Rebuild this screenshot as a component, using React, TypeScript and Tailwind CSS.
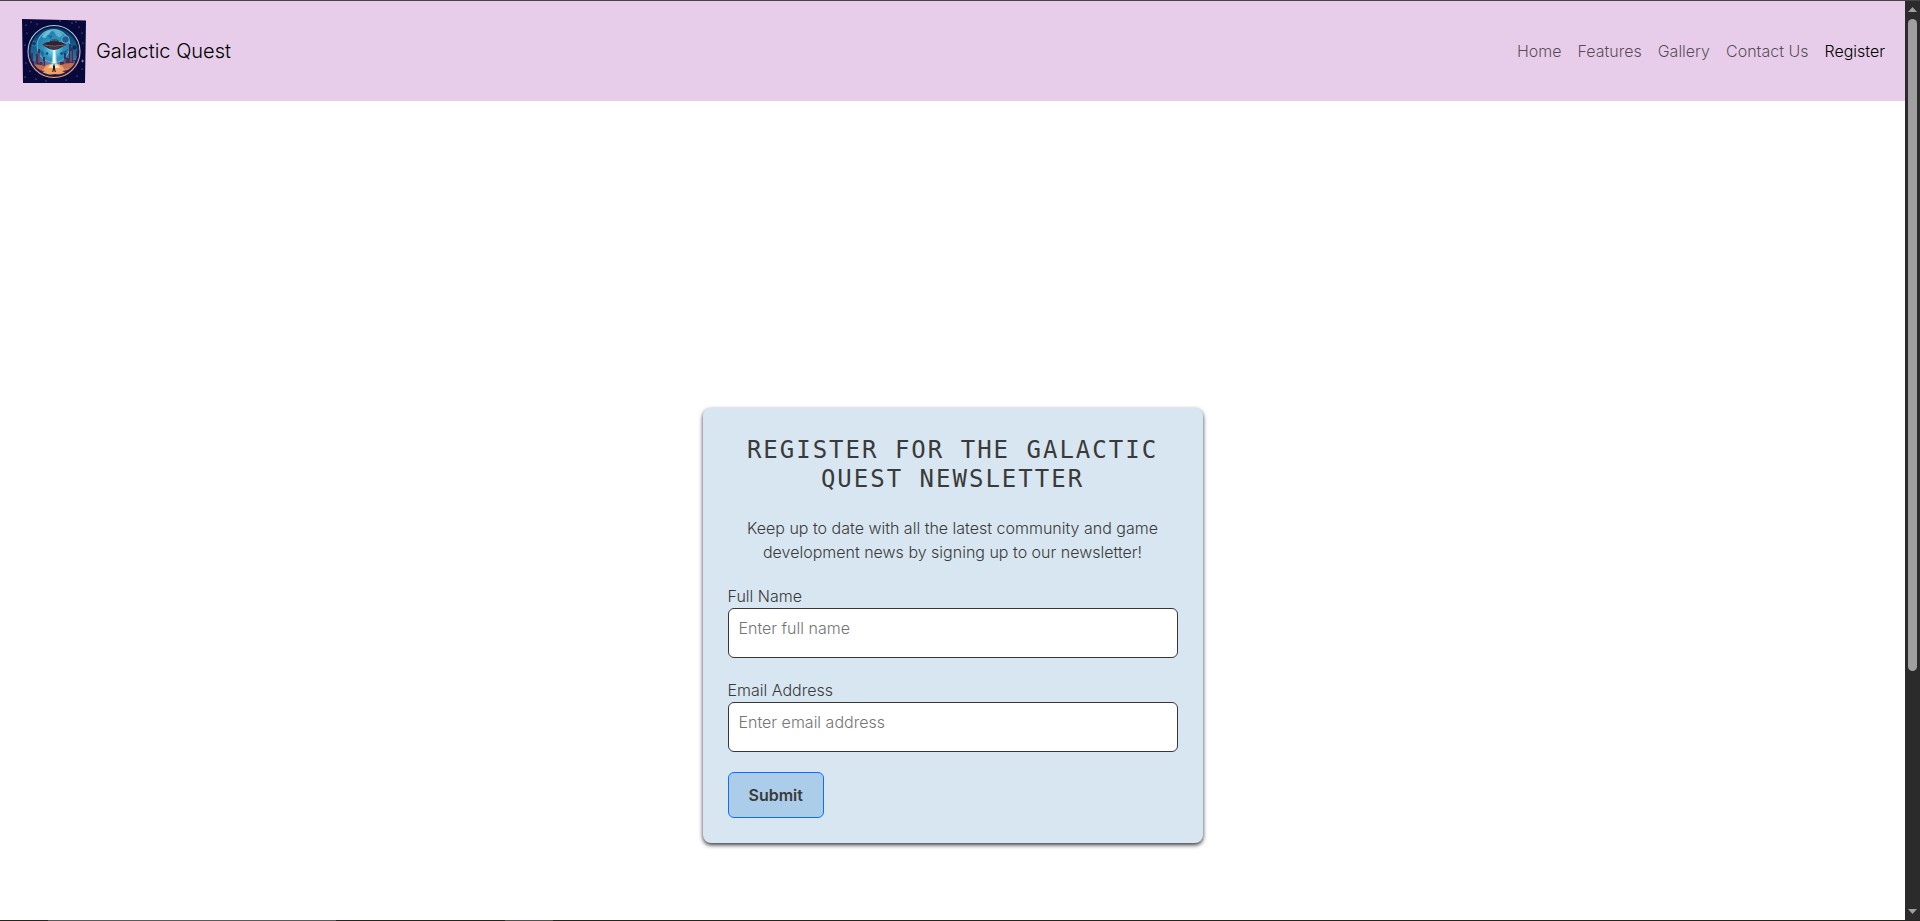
const links = ["Home", "Features", "Gallery", "Contact Us"];

const stars = [
  [4, 6], [9, 3], [15, 5], [5, 14], [50, 4], [57, 8], [60, 14], [54, 3], [61, 24], [3, 26],
  [4, 44], [8, 52], [3, 58], [14, 60], [24, 62], [44, 61], [55, 57], [60, 50], [61, 42], [38, 2],
];

function Logo() {
  return (
    <svg viewBox="0 0 64 64" className="size-16 shrink-0" role="img" aria-label="Galactic Quest logo">
      <defs>
        <linearGradient id="sky" x1="0" y1="0" x2="0" y2="1">
          <stop offset="0" stopColor="#0b2450" />
          <stop offset="0.4" stopColor="#145a8c" />
          <stop offset="0.6" stopColor="#2c6f9c" />
          <stop offset="0.75" stopColor="#a4617a" />
          <stop offset="1" stopColor="#4a1f33" />
        </linearGradient>
        <radialGradient id="planet" cx="0.5" cy="0.6" r="0.6">
          <stop offset="0" stopColor="#8fe3f2" />
          <stop offset="0.5" stopColor="#2b93bf" />
          <stop offset="0.85" stopColor="#2580b0" />
          <stop offset="1" stopColor="#55bfdb" />
        </radialGradient>
        <linearGradient id="ring" x1="0" y1="0" x2="0" y2="1">
          <stop offset="0" stopColor="#9bd3ea" />
          <stop offset="0.6" stopColor="#b3a5c4" />
          <stop offset="1" stopColor="#eba38c" />
        </linearGradient>
        <clipPath id="disc"><circle cx="32" cy="32.500" r="25" /></clipPath>
      </defs>
      <path d="M0 0 L64 1.500 L63 64 L1 64 Z" fill="#08083a" />
      {stars.map(([x, y]) => (
        <circle key={`${x}-${y}`} cx={x} cy={y} r="0.600" fill="#7f9fd0" />
      ))}
      <path d="M60.500 40.500v3M59 42h3" stroke="#a8b8dc" strokeWidth="0.500" />
      <g clipPath="url(#disc)">
        <rect width="64" height="64" fill="url(#sky)" />
        <circle cx="31.500" cy="27" r="16.500" fill="url(#planet)" stroke="#7fd3e6" strokeWidth="0.700" />
        <path d="M20 18q3-6 9-6.500-1 4-4 5-1 4-5 1.500z" fill="#7dcbdf" opacity="0.800" />
        <path d="M32 11.500q5 0 9 4l-3 3q-5-1-6-7z" fill="#6abdd6" opacity="0.800" />
        <path d="M26 16l5 1-3 3zM17 30l5 3-1 6zM40 33l6-3-3 8z" fill="#16618f" opacity="0.750" />
        <circle cx="43.500" cy="20.500" r="3.800" fill="#1f5e8e" stroke="#8ecfe4" strokeWidth="0.700" />
        <circle cx="12" cy="24.500" r="2.400" fill="#0f3e70" stroke="#5aaed0" strokeWidth="0.500" />
        <circle cx="52.500" cy="28.500" r="2.200" fill="#0c2d5c" />
        <circle cx="25" cy="34.500" r="1.200" fill="#12416f" />
        <circle cx="39.500" cy="34.500" r="1.200" fill="#12416f" />
        <path d="M7 50V37h2v-3h2v8h3v-7h2v-5h2v13h3v-5h2v12h4v3zM58 50V35h-2v-3h-2v9h-3V29h-2v-4h-2v14h-3v-5h-2v9h-4v7z" fill="#33345f" />
        <path d="M9 39v7M13 42v5M17 34v10M21 42v4M43 40v6M49 32v11M52 42v4M55 37v8" stroke="#b06675" strokeWidth="0.900" />
        <path d="M6 47q10-3 17 0t16-1 20 0v16H6z" fill="#c46d55" />
        <path d="M24 46.500q8-4 16 0l5 8q-13 3-26 0z" fill="#f0a065" />
        <path d="M28 46q4-2 8 0l2 3H26z" fill="#ffe1ae" />
        <path d="M6 49l7-1 5 3 5 1-4 2 5 2-8 2H6zM59 49l-8-1-6 3-5 1 4 2-5 2 9 2h11z" fill="#5a2740" />
        <path d="M9 55l9-1 8 2 7-1 9 1 11-2v8H9z" fill="#3a1c3b" />
        <path d="M20 51.500l4 .5M42 50.500l5-.5M24 57h6M34 57.500h6" stroke="#e8925a" strokeWidth="0.800" />
        <path d="M31 30h2.500l1.800 17h-6z" fill="#a8ecf8" opacity="0.700" />
        <path d="M31.500 30h1.500l.6 14h-2.600z" fill="#fff" />
        <path d="M27.500 23.500q.5-3.500 4.800-3.500t4.700 3.500z" fill="#2c3850" />
        <path d="M29 21.500q3-1.500 6 0" fill="none" stroke="#7895a8" strokeWidth="0.600" />
        <path d="M20.500 25.500q3-3 11.500-3t12 3q0 1.200-4 2.500-3 2.500-8 3-5-.5-8-3-3.500-1.300-3.500-2.500z" fill="#2e2435" />
        <path d="M21.500 26q10.500 2.500 21.500 0" fill="none" stroke="#94655f" strokeWidth="0.900" />
        <path d="M27 28.500q5 1.500 10 0" fill="none" stroke="#61506a" strokeWidth="0.700" />
        <path d="M31 49.500v-2.500q1-1.500 2 0v2.500l.8 3.500h-1l-.8-2.500-.8 2.500h-1z" fill="#1d1228" />
        <circle cx="32" cy="46" r="0.700" fill="#1d1228" />
      </g>
      <circle cx="32" cy="32.500" r="26" fill="none" stroke="url(#ring)" strokeWidth="1.200" />
      <circle cx="32" cy="32.500" r="24.300" fill="none" stroke="#0a1a42" strokeWidth="1.300" />
    </svg>
  );
}

function Field({ id, label, placeholder, type }: { id: string; label: string; placeholder: string; type: string }) {
  return (
    <div className="mb-5">
      <label htmlFor={id} className="block">{label}</label>
      <input
        id={id}
        type={type}
        placeholder={placeholder}
        className="block h-[50px] w-full rounded-md border border-[#36363b] bg-white px-[10px] pt-1 pb-[14px] placeholder:text-[#757575]"
      />
    </div>
  );
}

export default function App() {
  return (
    <div className="flex h-screen flex-col overflow-hidden bg-white font-['Inter',sans-serif] text-base leading-6 font-light text-[#3a3a3a]">
      <div className="h-px shrink-0 bg-[#444444]" />
      <div className="flex min-h-0 flex-1">
        <div className="flex min-w-0 flex-1 flex-col">
          <header className="flex h-[100px] shrink-0 items-center justify-between bg-[#e7cde9] pr-5 pl-[22px]">
            <a href="#home" className="flex items-center gap-[10px] text-xl text-black">
              <Logo />
              Galactic Quest
            </a>
            <nav className="flex gap-4 text-black/65">
              {links.map((link) => (
                <a key={link} href={`#${link}`}>{link}</a>
              ))}
              <a href="#register" aria-current="page" className="text-black">Register</a>
            </nav>
          </header>
          <main className="flex flex-1 flex-col items-center justify-end pb-[77px]">
            <form className="w-[500px] max-w-full rounded-lg bg-[#d8e6f1] px-[25px] pt-7 pb-[25px] shadow-[0_2px_4px_#36363b]">
              <h1 className="mb-[22px] text-center font-['DejaVu_Sans_Mono',monospace] text-2xl leading-[29px] font-normal tracking-[2px] uppercase">
                Register for the Galactic Quest Newsletter
              </h1>
              <p className="mb-5 px-4 text-center">
                Keep up to date with all the latest community and game development news by signing up to our newsletter!
              </p>
              <Field id="name" type="text" label="Full Name" placeholder="Enter full name" />
              <Field id="email" type="email" label="Email Address" placeholder="Enter email address" />
              <button type="button" className="block h-[46px] rounded-md border border-[#0d6efd] bg-[#abcdea] px-5 text-base font-semibold">
                Submit
              </button>
            </form>
          </main>
        </div>
        <div className="flex w-[15px] shrink-0 flex-col items-center bg-[#2b2b2b] pt-[6px] pb-[6px]" aria-hidden="true">
          <svg viewBox="0 0 9 5" className="h-[5px] w-[9px]"><path d="M0 5L4.500 0 9 5z" fill="#9f9f9f" /></svg>
          <div className="mt-[7px] h-[652px] w-[9px] rounded-full bg-[#9f9f9f]" />
          <svg viewBox="0 0 9 5" className="mt-auto h-[5px] w-[9px]"><path d="M0 0L4.500 5 9 0z" fill="#9f9f9f" /></svg>
        </div>
      </div>
      <div className="flex h-px shrink-0 bg-[#272420]">
        <div className="ml-12 w-72 bg-[#5a5a5a]" />
        <div className="ml-[169px] w-12 bg-[#55514a]" />
      </div>
    </div>
  );
}
